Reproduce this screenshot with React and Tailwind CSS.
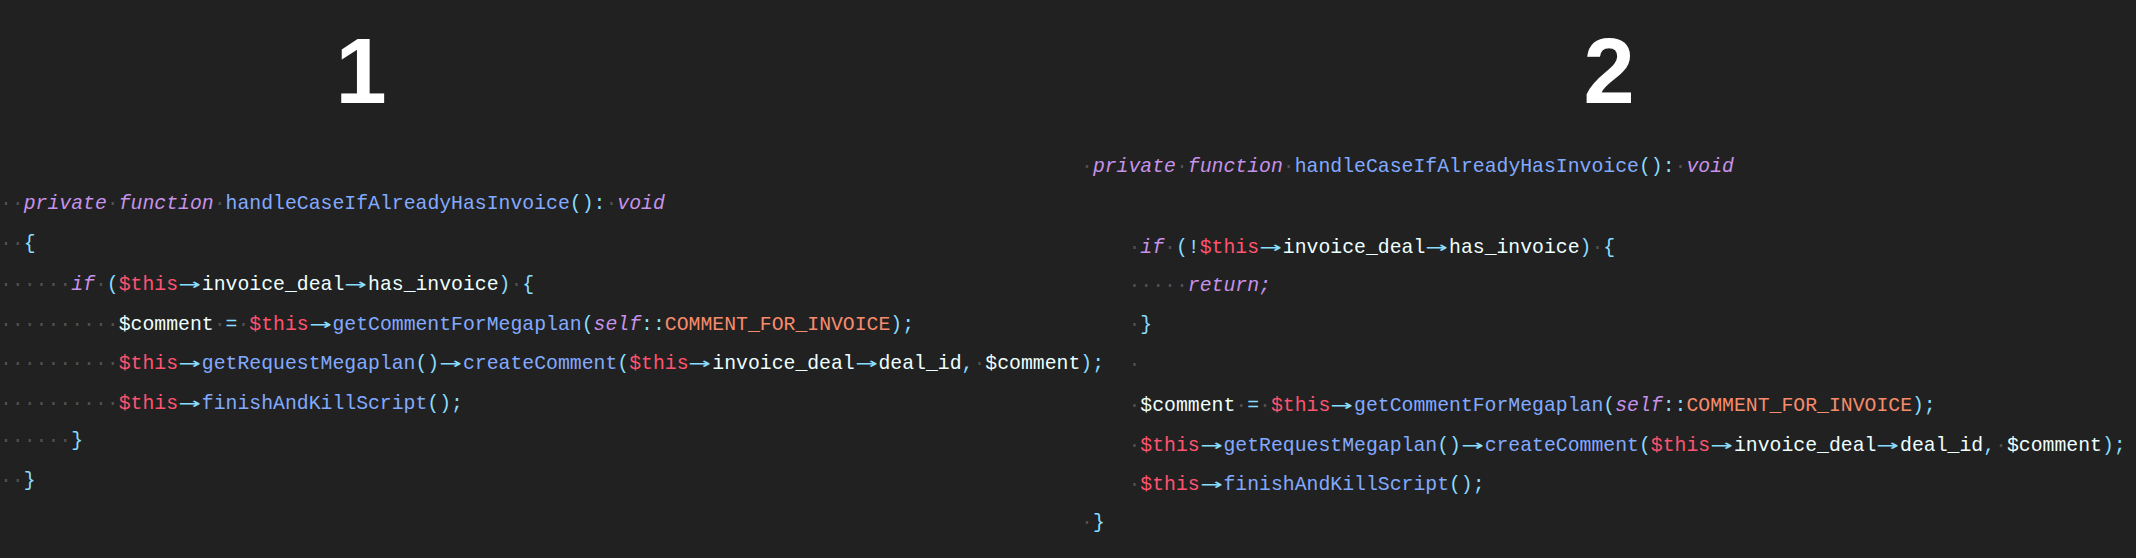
import React from "react";

// token colours (material darker)
const tone = {
  k: "text-[#c792ea] italic",
  f: "text-[#82aaff]",
  t: "text-[#ff5370]",
  p: "text-[#89ddff]",
  v: "text-[#eeffff]",
  c: "text-[#f78c6c]",
  d: "text-[#505050]",
  b: "",
};

const dots = (n) => ["d", "·".repeat(n)];
const blank = (n) => ["b", " ".repeat(n)];
const A = ["a"];

const callFinish = [["t", "$this"], A, ["f", "finishAndKillScript"], ["p", "();"]];
const callComment = [
  ["v", "$comment"], dots(1), ["p", "="], dots(1), ["t", "$this"], A,
  ["f", "getCommentForMegaplan"], ["p", "("], ["k", "self"], ["p", "::"],
  ["c", "COMMENT_FOR_INVOICE"], ["p", ");"],
];
const callCreate = [
  ["t", "$this"], A, ["f", "getRequestMegaplan"], ["p", "()"], A,
  ["f", "createComment"], ["p", "("], ["t", "$this"], A, ["v", "invoice_deal"], A,
  ["v", "deal_id"], ["p", ","], dots(1), ["v", "$comment"], ["p", ");"],
];
const signature = [
  ["k", "private"], dots(1), ["k", "function"], dots(1),
  ["f", "handleCaseIfAlreadyHasInvoice"], ["p", "():"], dots(1), ["k", "void"],
];

const before = [
  [dots(2), ...signature],
  [dots(2), ["p", "{"]],
  [dots(6), ["k", "if"], dots(1), ["p", "("], ["t", "$this"], A, ["v", "invoice_deal"], A, ["v", "has_invoice"], ["p", ")"], dots(1), ["p", "{"]],
  [dots(10), ...callComment],
  [dots(10), ...callCreate],
  [dots(10), ...callFinish],
  [dots(6), ["p", "}"]],
  [dots(2), ["p", "}"]],
];

const after = [
  [dots(1), ...signature],
  [],
  [blank(4), dots(1), ["k", "if"], dots(1), ["p", "(!"], ["t", "$this"], A, ["v", "invoice_deal"], A, ["v", "has_invoice"], ["p", ")"], dots(1), ["p", "{"]],
  [blank(4), dots(5), ["k", "return;"]],
  [blank(4), dots(1), ["p", "}"]],
  [blank(4), dots(1)],
  [blank(4), dots(1), ...callComment],
  [blank(4), dots(1), ...callCreate],
  [blank(4), dots(1), ...callFinish],
  [dots(1), ["p", "}"]],
];

// "->" ligature: one arrow across two cells
const Arrow = () => (
  <span className="inline-block w-[2ch] text-center text-[#89ddff]">
    <span className="inline-block scale-x-[1.85] font-['DejaVu_Sans_Mono',monospace]">→</span>
  </span>
);

const CodeBlock = ({ lines }) => (
  <div className="font-['Liberation_Mono',monospace] text-[19.8px] leading-[39.5px] whitespace-pre">
    {lines.map((line, i) => (
      <div key={i} className="h-[39.5px]">
        {line.map(([type, text], j) =>
          type === "a" ? (
            <Arrow key={j} />
          ) : (
            <span key={j} className={tone[type]}>
              {text}
            </span>
          )
        )}
      </div>
    ))}
  </div>
);

const Heading = ({ children, offset }) => (
  <div
    className={`mt-[25px] h-[92px] w-[100px] text-center text-[92px] leading-[92px] font-bold text-white font-['Liberation_Sans',Arial,sans-serif] ${offset}`}
  >
    {children}
  </div>
);

export default function App() {
  return (
    <div className="flex h-[558px] w-[2136px] overflow-hidden bg-[#212121]">
      {/* before */}
      <div className="w-[1081px] shrink-0">
        <Heading offset="ml-[311px]">1</Heading>
        <div className="mt-[68px]">
          <CodeBlock lines={before} />
        </div>
      </div>

      {/* after */}
      <div className="flex-1">
        <Heading offset="ml-[478px]">2</Heading>
        <div className="mt-[31px]">
          <CodeBlock lines={after} />
        </div>
      </div>
    </div>
  );
}
